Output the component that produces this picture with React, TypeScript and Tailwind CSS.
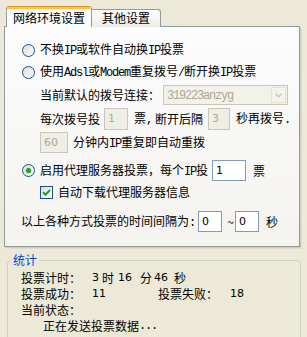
import React from "react";

const L = ({ children }: { children: React.ReactNode }) => (
  <span className="font-['Liberation_Mono',monospace] tracking-[-1.2px]">{children}</span>
);

function Radio({ checked }: { checked?: boolean }) {
  return (
    <span className="w-[13px] h-[13px] rounded-full border border-[#1C5180] bg-linear-to-br from-[#DCDCD5] to-white flex items-center justify-center shrink-0">
      {checked && <span className="w-[5px] h-[5px] rounded-full bg-[#21A121] shadow-[0_0_1px_#4CC64C]" />}
    </span>
  );
}

function Check() {
  return (
    <span className="w-[13px] h-[13px] border border-[#1C5180] bg-linear-to-br from-[#DCDCD5] to-white flex items-center justify-center shrink-0">
      <svg width="9" height="9" viewBox="0 0 9 9">
        <path d="M1 4.2 L3.5 6.7 L8 2" stroke="#21A121" strokeWidth="2" fill="none" />
      </svg>
    </span>
  );
}

function Input({ value, w, h, disabled }: { value: string; w: string; h: string; disabled?: boolean }) {
  return (
    <span
      className={
        (disabled
          ? "border-[#C9C7BA] bg-[#EFEEE6] text-[#ACA899] "
          : "border-[#7F9DB9] bg-white text-black ") +
        `border flex items-center pl-[3px] shrink-0 font-['DejaVu_Sans',sans-serif] text-[11px] ${w} ${h}`
      }
    >
      {value}
    </span>
  );
}

export default function App() {
  return (
    <div className="w-[307px] h-[337px] overflow-hidden bg-[#ECE9D8] text-[12px] leading-[16px] text-black font-['Noto_Sans_CJK_SC','Noto_Sans_CJK_JP',sans-serif]">
      {/* Tabs */}
      <div className="h-[21px] mt-[6px] flex items-end pl-[6px]">
        <div className="relative z-10 h-[21px] w-[86px] bg-[#FCFCFE] border-l border-r border-[#919B9C] rounded-t-[3px] overflow-hidden flex flex-col">
          <div className="h-[1px] bg-[#E68B2C]" />
          <div className="h-[2px] bg-[#FFC73C]" />
          <div className="flex-1 flex items-center justify-center pb-[1px]">网络环境设置</div>
        </div>
        <div className="h-[18px] w-[69px] bg-linear-to-b from-white to-[#ECEBE6] border-t border-r border-[#919B9C] rounded-tr-[3px] flex items-center justify-center pb-[1px]">
          其他设置
        </div>
      </div>

      {/* Panel */}
      <div className="-mt-[1px] ml-[4px] w-[296px] h-[221px] border border-[#919B9C] bg-linear-to-b from-[#FCFCFE] to-[#F4F3EE] shadow-[1px_1px_0_#D0CEBF,2px_2px_0_#E0DDCF] pt-[13px]">
        <div className="flex items-center h-[20px] pl-[17px]">
          <Radio />
          <span className="ml-[5px]">
            不换<L>IP</L>或软件自动换<L>IP</L>投票
          </span>
        </div>
        <div className="flex items-center h-[20px] pl-[17px] mt-[2px]">
          <Radio />
          <span className="ml-[5px]">
            使用<L>Adsl</L>或<L>Modem</L>重复拨号<L>/</L>断开换<L>IP</L>投票
          </span>
        </div>
        <div className="flex items-center h-[20px] pl-[35px] mt-[3px]">
          <span>当前默认的拨号连接：</span>
          <span className="ml-[3px] w-[125px] h-[20px] border border-[#C9C7BA] bg-[#F2F1EA] flex items-center">
            <span className="flex-1 pl-[3px] text-[#ACA899]">
              <L>319223anzyg</L>
            </span>
            <span className="w-[15px] h-[16px] mr-[1px] border border-[#E3E1D6] bg-[#F4F3EE] flex items-center justify-center">
              <svg width="7" height="5" viewBox="0 0 7 5">
                <path d="M0.5 0.8 L3.5 3.8 L6.5 0.8" stroke="#C9C7BA" strokeWidth="1.5" fill="none" />
              </svg>
            </span>
          </span>
        </div>
        <div className="flex items-center h-[22px] pl-[35px] mt-[3px]">
          <span>每次拨号投</span>
          <span className="ml-[4px]">
            <Input value="1" w="w-[24px]" h="h-[22px]" disabled />
          </span>
          <span className="ml-[6px]">
            票<L>,</L>
          </span>
          <span className="ml-[3px]">断开后隔</span>
          <span className="ml-[5px]">
            <Input value="3" w="w-[22px]" h="h-[22px]" disabled />
          </span>
          <span className="ml-[6px]">
            秒再拨号<L>.</L>
          </span>
        </div>
        <div className="flex items-center h-[21px] pl-[35px] mt-[2px]">
          <Input value="60" w="w-[28px]" h="h-[21px]" disabled />
          <span className="ml-[5px]">
            分钟内<L>IP</L>重复即自动重拨
          </span>
        </div>
        <div className="flex items-center h-[21px] pl-[17px] mt-[7px]">
          <Radio checked />
          <span className="ml-[5px]">
            启用代理服务器投票，每个<L>IP</L>投
          </span>
          <span className="ml-[4px]">
            <Input value="1" w="w-[34px]" h="h-[21px]" />
          </span>
          <span className="ml-[7px]">票</span>
        </div>
        <div className="flex items-center h-[20px] pl-[35px] mt-[1px]">
          <Check />
          <span className="ml-[5px]">自动下载代理服务器信息</span>
        </div>
        <div className="flex items-center h-[21px] pl-[16px] mt-[9px]">
          <span>
            以上各种方式投票的时间间隔为<L>:</L>
          </span>
          <span className="ml-[3px]">
            <Input value="0" w="w-[24px]" h="h-[21px]" />
          </span>
          <span className="ml-[4px] w-[9px] text-center">~</span>
          <span className="ml-[0px]">
            <Input value="0" w="w-[24px]" h="h-[21px]" />
          </span>
          <span className="ml-[7px]">秒</span>
        </div>
      </div>

      {/* Stats group */}
      <div className="relative mt-[13px] ml-[7px] w-[294px] h-[100px] border border-[#D0D0BF] rounded-[4px] pt-[9px] pl-[13px]">
        <span className="absolute -top-[9px] left-[3px] px-[2px] bg-[#ECE9D8] text-[#0046D5]">统计</span>
        <div className="flex items-center h-[16px]">
          <span className="w-[71px]">投票计时：</span>
          <span className="w-[10px] font-['DejaVu_Sans',sans-serif] text-[11px]">3</span>
          <span className="w-[16px]">时</span>
          <span className="w-[22px] font-['DejaVu_Sans',sans-serif] text-[11px]">16</span>
          <span className="w-[14px]">分</span>
          <span className="w-[20px] font-['DejaVu_Sans',sans-serif] text-[11px]">46</span>
          <span>秒</span>
        </div>
        <div className="flex items-center h-[16px]">
          <span className="w-[71px]">投票成功：</span>
          <span className="w-[66px] font-['DejaVu_Sans',sans-serif] text-[11px]">11</span>
          <span className="w-[72px]">投票失败：</span>
          <span className="font-['DejaVu_Sans',sans-serif] text-[11px]">18</span>
        </div>
        <div className="flex items-center h-[16px]">当前状态：</div>
        <div className="flex items-center h-[16px] pl-[22px]">
          正在发送投票数据<L>...</L>
        </div>
      </div>
    </div>
  );
}
